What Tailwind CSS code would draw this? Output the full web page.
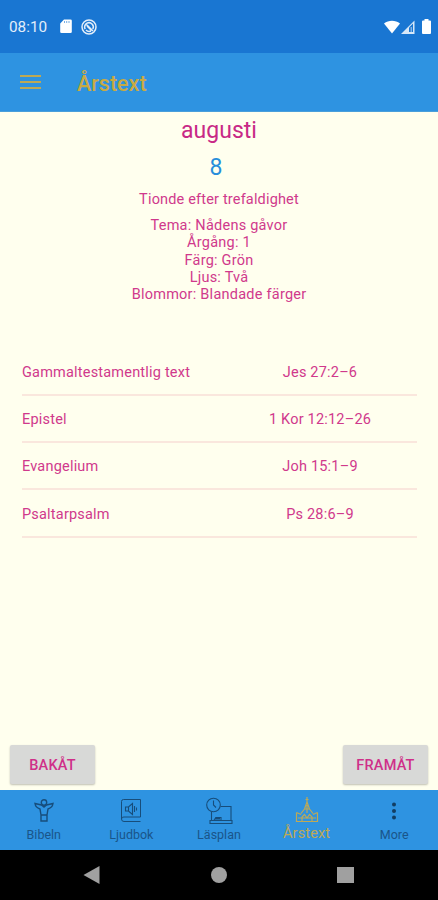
<!DOCTYPE html>
<html lang="sv">
<head>
    <meta charset="UTF-8">
    <meta name="viewport" content="width=device-width, initial-scale=1.0">
    <title>Årstext</title>
    <script src="https://cdn.jsdelivr.net/npm/@tailwindcss/browser@4"></script>
</head>
<body class="bg-[#ffffee] font-['Roboto',sans-serif]">
    <div class="flex h-[900px] w-[438px] flex-col overflow-hidden">
        <!-- Status bar -->
        <div class="flex h-[53px] shrink-0 items-center bg-[#1976d2] pl-[9px] pr-[7px] text-white">
            <span class="w-[51px] whitespace-nowrap pt-px text-[15.300px] leading-5 text-[#e3eefa]">08:10</span>
            <svg class="h-[15px] w-3" viewBox="0 0 12 15" fill="currentColor"><path d="M4 .5h6.500a1.300 1.300 0 0 1 1.300 1.300v11a1.300 1.300 0 0 1-1.300 1.300h-9a1.300 1.300 0 0 1-1.300-1.300V4.500z"/><path d="M4.500 2v2M6.700 2v2M9 2v2" stroke="#1976d2" stroke-width=".6"/></svg>
            <svg class="ml-[9px] h-4 w-4" viewBox="0 0 16 16" fill="none" stroke="#e3eefa"><circle cx="8" cy="8" r="7" stroke-width="1.500"/><path d="M4.200 10.200A4.300 4.300 0 0 1 6 4.200a4.300 4.300 0 0 1 5.800 5.800M5 11a4.300 4.300 0 0 0 5 1M6 7l4.500 4.500M4.500 4.500l7.500 7.500" stroke-width="1.500"/></svg>
            <svg class="ml-auto h-[14px] w-4" viewBox="0 0 16 14" fill="currentColor"><path d="M0 3.500C4.500-.3 11.500-.3 16 3.500L8 13.500z"/></svg>
            <svg class="ml-px h-[14px] w-[14px]" viewBox="0 0 14 14"><path d="M0 14L13.500.5V14z" fill="#d6e7f8"/><path d="M8 7.500L12 3.500v8.500H8z" fill="#1976d2"/><path d="M10.200 7V12" stroke="#d6e7f8" stroke-width=".8"/></svg>
            <svg class="ml-[7px] h-[15px] w-[9px]" viewBox="0 0 9 15" fill="currentColor"><path d="M2.500 1.500V0h4v1.500H8A1 1 0 0 1 9 2.500V14a1 1 0 0 1-1 1H1a1 1 0 0 1-1-1V2.500a1 1 0 0 1 1-1z"/></svg>
        </div>

        <!-- App bar -->
        <div class="flex h-[59px] shrink-0 items-center border-b border-[#4a9fda] bg-[#2e93e1] pl-5">
            <svg class="h-4 w-[21px]" viewBox="0 0 21 16" stroke="#bda955" stroke-width="2"><path d="M0 2h21M0 8h21M0 14h21"/></svg>
            <h1 class="ml-[36px] pt-[3px] text-[21.500px] font-medium leading-7 text-[#c9aa43]">Årstext</h1>
        </div>

        <!-- Day -->
        <main class="flex flex-1 flex-col text-[#d0398c]">
            <div class="pt-1 text-center">
                <div class="text-[23px] leading-[29px] text-[#c82986]">augusti</div>
                <div class="mt-2 pr-[6px] text-[23px] leading-[30px] text-[#278edb]">8</div>
                <div class="mt-2 text-[14.500px] leading-[17px] tracking-[0.17px]">Tionde efter trefaldighet</div>
                <div class="mt-[9px] text-[14.500px] leading-[17.300px] tracking-[0.24px]">
                    <div>Tema: Nådens gåvor</div>
                    <div>Årgång: 1</div>
                    <div>Färg: Grön</div>
                    <div>Ljus: Två</div>
                    <div>Blommor: Blandade färger</div>
                </div>
            </div>

            <div class="mx-[22px] mt-[45px] mr-[21px] text-[14.500px] leading-[17px] tracking-[0.2px]">
                <div class="flex h-[47.300px] items-center border-b-2 border-[#fae7dd] pt-0.5"><span class="w-[201px]">Gammaltestamentlig text</span><span class="flex-1 text-center">Jes 27:2–6</span></div>
                <div class="flex h-[47.300px] items-center border-b-2 border-[#fae7dd] pt-0.5"><span class="w-[201px]">Epistel</span><span class="flex-1 text-center">1 Kor 12:12–26</span></div>
                <div class="flex h-[47.300px] items-center border-b-2 border-[#fae7dd] pt-0.5"><span class="w-[201px]">Evangelium</span><span class="flex-1 text-center">Joh 15:1–9</span></div>
                <div class="flex h-[47.300px] items-center border-b-2 border-[#fae7dd] pt-0.5"><span class="w-[201px]">Psaltarpsalm</span><span class="flex-1 text-center">Ps 28:6–9</span></div>
            </div>

            <div class="mt-auto flex justify-between px-[10px] pb-[6px] text-[14.500px] font-medium tracking-[0.2px] text-[#cf2f89]">
                <button class="h-[39px] w-[85px] rounded-[2px] bg-[#d8d9d7] pt-0.5 shadow-[0_1px_2px_rgba(0,0,0,0.25)]">BAKÅT</button>
                <button class="h-[39px] w-[85px] rounded-[2px] bg-[#d8d9d7] pt-0.5 shadow-[0_1px_2px_rgba(0,0,0,0.25)]">FRAMÅT</button>
            </div>
        </main>

        <!-- Tabs -->
        <nav class="grid h-[60px] shrink-0 grid-cols-5 bg-[#2e93e1] pt-[7px] text-center text-[12.500px] leading-4 text-[#1a5589]">
            <div class="flex flex-col items-center">
                <svg class="h-7 w-7" viewBox="0 0 28 28" fill="none" stroke="#174d7b" stroke-width="1.400"><circle cx="14" cy="5.500" r="2.700"/><path d="M11.500 8L5 6.500q.5 4 5 5.500l1 6M16.500 8l6.500-1.500q-.5 4-5 5.500l-1 6M11 18h6v6h-6zM11.500 8l2.500 2 2.500-2"/></svg>
                <span class="mt-0.5">Bibeln</span>
            </div>
            <div class="flex flex-col items-center">
                <svg class="h-7 w-7" viewBox="0 0 28 28" fill="none" stroke="#174d7b"><path d="M23.500 20V2.500H6.500a2 2 0 0 0-2 2V22a2.500 2.500 0 0 0 2.500 2.500h16.500M4.500 22a2.200 2.200 0 0 1 2.500-2h16.500"/><path d="M8.500 10h3l4-3.500v11l-4-3.500h-3zM11.500 10v4M17.500 9v6M19.500 10.500v3" stroke-width="1.100"/></svg>
                <span class="mt-0.5">Ljudbok</span>
            </div>
            <div class="flex flex-col items-center">
                <svg class="h-7 w-7" viewBox="0 0 28 28" fill="none" stroke="#174d7b" stroke-width="1.100"><circle cx="8.500" cy="8" r="6.800"/><path d="M8.500 3.500V8l2.500 2.500M15.500 9.500H26V23M6.500 15v8M5 23.500h22v3H5zM9 23l2-2.500h5V23"/><path d="M10 21.500h5" stroke-width="2"/></svg>
                <span class="mt-0.5">Läsplan</span>
            </div>
            <div class="flex flex-col items-center text-[#bea956]">
                <svg class="h-7 w-7" viewBox="0 0 28 28" fill="none" stroke="currentColor" stroke-width="1.200"><path d="M14 0v6M12.500 2.500h3M14 5l-2.500 7L8 16.500M14 5l2.500 7 3.500 4.500M11.500 12h5M3.500 15.500v9h21v-9M3.500 15.500l4.500 2M24.500 15.500l-4.500 2M5 21h18M9 24v-4l2.500-2.500L14 21l2.500-3.500L19 20v4M14 8v8"/></svg>
                <span class="mt-px text-[14.500px] tracking-[0.15px]">Årstext</span>
            </div>
            <div class="flex flex-col items-center">
                <svg class="h-7 w-7" viewBox="0 0 28 28" fill="#123e63"><circle cx="14" cy="7.500" r="2"/><circle cx="14" cy="14" r="2"/><circle cx="14" cy="20.500" r="2"/></svg>
                <span class="mt-0.5">More</span>
            </div>
        </nav>

        <!-- System navigation -->
        <div class="flex h-[50px] shrink-0 items-center justify-between bg-black pl-[83px] pr-[84px]">
            <svg class="h-[18px] w-[17px]" viewBox="0 0 17 18" fill="#a0a0a0"><path d="M16.500 0v18L.500 9z"/></svg>
            <div class="h-4 w-4 rounded-full bg-[#a0a0a0]"></div>
            <div class="h-4 w-[17px] bg-[#a0a0a0]"></div>
        </div>
    </div>
</body>
</html>
